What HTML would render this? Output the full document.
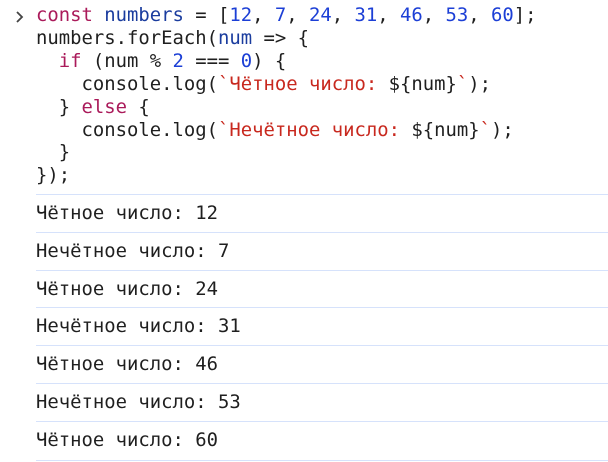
<!DOCTYPE html><html><head><style>
body{margin:0;width:608px;height:462px;background:#fff;overflow:hidden;font-family:"DejaVu Sans Mono","Liberation Mono",monospace;font-size:18.9px;color:#1f1f1f;position:relative}
.code{position:absolute;left:36px;top:4px;line-height:22.9px;white-space:pre}
.k{color:#aa1a5a}.v{color:#1a3c9e}.n{color:#1c3fd6}.s{color:#c8281e}
.p{position:absolute;left:15px;top:10px}
.row{position:absolute;left:36px;right:0;height:37.8px;border-top:1px solid #d6e2fb;line-height:37px;white-space:pre}
</style></head><body>
<svg class="p" width="10" height="14" viewBox="0 0 10 14"><polyline points="2,2 7,7 2,12" fill="none" stroke="#444" stroke-width="1.8"/></svg>
<div class="code"><span class="k">const</span> <span class="v">numbers</span> = [<span class="n">12</span>, <span class="n">7</span>, <span class="n">24</span>, <span class="n">31</span>, <span class="n">46</span>, <span class="n">53</span>, <span class="n">60</span>];
numbers.forEach(<span class="v">num</span> =&gt; {
  <span class="k">if</span> (num % <span class="n">2</span> === <span class="n">0</span>) {
    console.log(<span class="s">`Чётное число: </span>${num}<span class="s">`</span>);
  } <span class="k">else</span> {
    console.log(<span class="s">`Нечётное число: </span>${num}<span class="s">`</span>);
  }
});</div>
<div class="row" style="top:194px">Чётное число: 12</div>
<div class="row" style="top:232px">Нечётное число: 7</div>
<div class="row" style="top:270px">Чётное число: 24</div>
<div class="row" style="top:307px">Нечётное число: 31</div>
<div class="row" style="top:345px">Чётное число: 46</div>
<div class="row" style="top:383px">Нечётное число: 53</div>
<div class="row" style="top:421px;border-bottom:1px solid #d6e2fb">Чётное число: 60</div>
</body></html>
